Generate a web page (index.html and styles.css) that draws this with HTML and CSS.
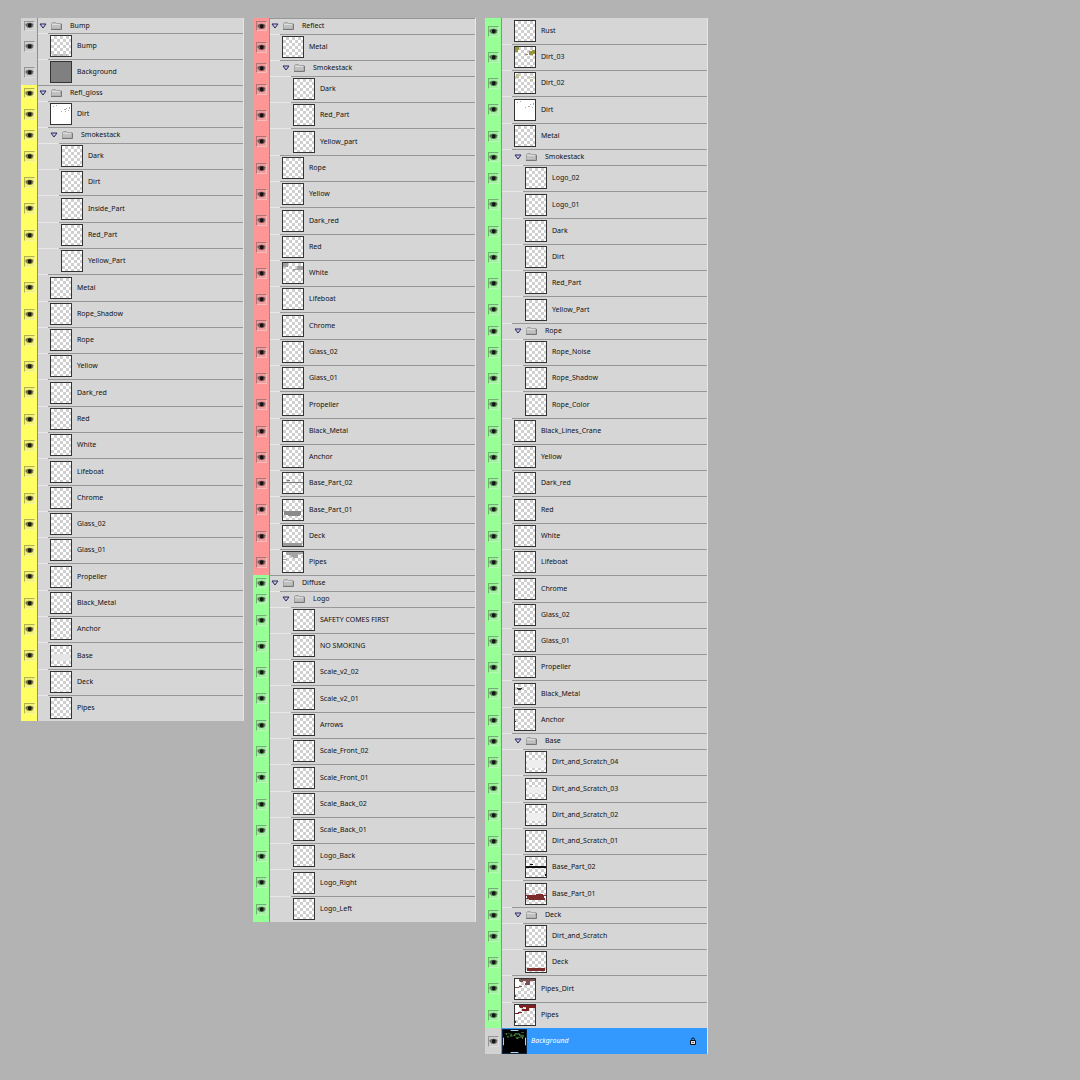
FILE: index.html
```
<!DOCTYPE html>
<html lang="en">
<head>
<meta charset="utf-8">
<meta name="viewport" content="width=device-width, initial-scale=1">
<title>Layers</title>
<link rel="stylesheet" href="styles.css">
</head>
<body>
<main class="panels">

<section class="panel" aria-label="Bump and gloss layers">
<ul class="group">
<li class="row folder cut"><input type="checkbox" id="f1" checked><button class="twist" aria-label="Collapse Bump"></button><label for="f1">Bump</label></li>
<li class="row layer"><label><input type="checkbox" checked><i class="thumb"><svg viewBox="0 0 20 20"><path fill="#999" d="M1 18h15v2H1z" opacity=".5"/></svg></i>Bump</label></li>
<li class="row layer"><label><input type="checkbox" checked><i class="thumb gray"></i>Background</label></li>
</ul>
<ul class="group yellow">
<li class="row folder"><input type="checkbox" id="f2" checked><button class="twist" aria-label="Collapse Refl_gloss"></button><label for="f2">Refl_gloss</label></li>
<li class="row layer"><label><input type="checkbox" checked><i class="thumb white"><svg viewBox="0 0 20 20"><path fill="#aaa" d="M2 2h1v1H2zM10 7h1v1h-1zM13 5h2v1h-2zM15 4h1v1h-1zM18 3h1v2h-1zM17 6h1v1h-1zM14 7h1v1h-1zM5 1h1v1H5z"/></svg></i>Dirt</label></li>
<li class="row folder d1"><input type="checkbox" id="f3" checked><button class="twist" aria-label="Collapse Smokestack"></button><label for="f3">Smokestack</label></li>
<li class="row layer d2"><label><input type="checkbox" checked><i class="thumb"></i>Dark</label></li>
<li class="row layer d2"><label><input type="checkbox" checked><i class="thumb"></i>Dirt</label></li>
<li class="row layer d2"><label><input type="checkbox" checked><i class="thumb"></i>Inside_Part</label></li>
<li class="row layer d2"><label><input type="checkbox" checked><i class="thumb"></i>Red_Part</label></li>
<li class="row layer d2"><label><input type="checkbox" checked><i class="thumb"></i>Yellow_Part</label></li>
<li class="row layer"><label><input type="checkbox" checked><i class="thumb"></i>Metal</label></li>
<li class="row layer"><label><input type="checkbox" checked><i class="thumb"></i>Rope_Shadow</label></li>
<li class="row layer"><label><input type="checkbox" checked><i class="thumb"></i>Rope</label></li>
<li class="row layer"><label><input type="checkbox" checked><i class="thumb"></i>Yellow</label></li>
<li class="row layer"><label><input type="checkbox" checked><i class="thumb"></i>Dark_red</label></li>
<li class="row layer"><label><input type="checkbox" checked><i class="thumb"></i>Red</label></li>
<li class="row layer"><label><input type="checkbox" checked><i class="thumb"></i>White</label></li>
<li class="row layer"><label><input type="checkbox" checked><i class="thumb"></i>Lifeboat</label></li>
<li class="row layer"><label><input type="checkbox" checked><i class="thumb"></i>Chrome</label></li>
<li class="row layer"><label><input type="checkbox" checked><i class="thumb"></i>Glass_02</label></li>
<li class="row layer"><label><input type="checkbox" checked><i class="thumb"></i>Glass_01</label></li>
<li class="row layer"><label><input type="checkbox" checked><i class="thumb"></i>Propeller</label></li>
<li class="row layer"><label><input type="checkbox" checked><i class="thumb"></i>Black_Metal</label></li>
<li class="row layer"><label><input type="checkbox" checked><i class="thumb"></i>Anchor</label></li>
<li class="row layer"><label><input type="checkbox" checked><i class="thumb"><svg viewBox="0 0 20 20"><path fill="#e6e6e6" d="M1 8h18v7H1z"/></svg></i>Base</label></li>
<li class="row layer"><label><input type="checkbox" checked><i class="thumb"><svg viewBox="0 0 20 20"><path fill="#eee" d="M1 17h18v2H1z"/></svg></i>Deck</label></li>
<li class="row layer"><label><input type="checkbox" checked><i class="thumb"></i>Pipes</label></li>
</ul>
</section>

<section class="panel" aria-label="Reflect and diffuse layers">
<ul class="group red">
<li class="row folder"><input type="checkbox" id="f4" checked><button class="twist" aria-label="Collapse Reflect"></button><label for="f4">Reflect</label></li>
<li class="row layer"><label><input type="checkbox" checked><i class="thumb"></i>Metal</label></li>
<li class="row folder d1"><input type="checkbox" id="f5" checked><button class="twist" aria-label="Collapse Smokestack"></button><label for="f5">Smokestack</label></li>
<li class="row layer d2"><label><input type="checkbox" checked><i class="thumb"></i>Dark</label></li>
<li class="row layer d2"><label><input type="checkbox" checked><i class="thumb"></i>Red_Part</label></li>
<li class="row layer d2"><label><input type="checkbox" checked><i class="thumb"></i>Yellow_part</label></li>
<li class="row layer"><label><input type="checkbox" checked><i class="thumb"></i>Rope</label></li>
<li class="row layer"><label><input type="checkbox" checked><i class="thumb"></i>Yellow</label></li>
<li class="row layer"><label><input type="checkbox" checked><i class="thumb"></i>Dark_red</label></li>
<li class="row layer"><label><input type="checkbox" checked><i class="thumb"></i>Red</label></li>
<li class="row layer"><label><input type="checkbox" checked><i class="thumb"><svg viewBox="0 0 20 20"><path fill="#a0a0a0" d="M0 0h5v4H0zM14 3h6v4h-6zM10 6h4v1h-2v1h-2z"/></svg></i>White</label></li>
<li class="row layer"><label><input type="checkbox" checked><i class="thumb"></i>Lifeboat</label></li>
<li class="row layer"><label><input type="checkbox" checked><i class="thumb"></i>Chrome</label></li>
<li class="row layer"><label><input type="checkbox" checked><i class="thumb"></i>Glass_02</label></li>
<li class="row layer"><label><input type="checkbox" checked><i class="thumb"></i>Glass_01</label></li>
<li class="row layer"><label><input type="checkbox" checked><i class="thumb"></i>Propeller</label></li>
<li class="row layer"><label><input type="checkbox" checked><i class="thumb"></i>Black_Metal</label></li>
<li class="row layer"><label><input type="checkbox" checked><i class="thumb"></i>Anchor</label></li>
<li class="row layer"><label><input type="checkbox" checked><i class="thumb"><svg viewBox="0 0 20 20"><path fill="#777" d="M0 9h20v1H0zM4 7h3v1H4z"/></svg></i>Base_Part_02</label></li>
<li class="row layer"><label><input type="checkbox" checked><i class="thumb"><svg viewBox="0 0 20 20"><path fill="#8a8a8a" d="M1 11h17v4h-1v1H5v-1H1z"/></svg></i>Base_Part_01</label></li>
<li class="row layer"><label><input type="checkbox" checked><i class="thumb"><svg viewBox="0 0 20 20"><path fill="#999" d="M0 17h19v3H0z"/></svg></i>Deck</label></li>
<li class="row layer"><label><input type="checkbox" checked><i class="thumb"><svg viewBox="0 0 20 20"><path fill="#a5a5a5" d="M3 0h17v2h-5v4h-5V5H8V3H3zM0 7h4v1H0z"/></svg></i>Pipes</label></li>
</ul>
<ul class="group green">
<li class="row folder"><input type="checkbox" id="f6" checked><button class="twist" aria-label="Collapse Diffuse"></button><label for="f6">Diffuse</label></li>
<li class="row folder d1"><input type="checkbox" id="f7" checked><button class="twist" aria-label="Collapse Logo"></button><label for="f7">Logo</label></li>
<li class="row layer d2"><label><input type="checkbox" checked><i class="thumb"></i>SAFETY COMES FIRST</label></li>
<li class="row layer d2"><label><input type="checkbox" checked><i class="thumb"></i>NO SMOKING</label></li>
<li class="row layer d2"><label><input type="checkbox" checked><i class="thumb"></i>Scale_v2_02</label></li>
<li class="row layer d2"><label><input type="checkbox" checked><i class="thumb"></i>Scale_v2_01</label></li>
<li class="row layer d2"><label><input type="checkbox" checked><i class="thumb"></i>Arrows</label></li>
<li class="row layer d2"><label><input type="checkbox" checked><i class="thumb"></i>Scale_Front_02</label></li>
<li class="row layer d2"><label><input type="checkbox" checked><i class="thumb"></i>Scale_Front_01</label></li>
<li class="row layer d2"><label><input type="checkbox" checked><i class="thumb"></i>Scale_Back_02</label></li>
<li class="row layer d2"><label><input type="checkbox" checked><i class="thumb"></i>Scale_Back_01</label></li>
<li class="row layer d2"><label><input type="checkbox" checked><i class="thumb"></i>Logo_Back</label></li>
<li class="row layer d2"><label><input type="checkbox" checked><i class="thumb"></i>Logo_Right</label></li>
<li class="row layer d2"><label><input type="checkbox" checked><i class="thumb"></i>Logo_Left</label></li>
</ul>
</section>

<section class="panel" aria-label="Diffuse layers, continued">
<ul class="group green">
<li class="row layer cut"><label><input type="checkbox" checked><i class="thumb"></i>Rust</label></li>
<li class="row layer"><label><input type="checkbox" checked><i class="thumb"><svg viewBox="0 0 20 20"><path fill="#9a9440" d="M0 0h4v3H3v2H0zM14 4h6v3h-2v1h-4zM10 7h3v1h-3zM17 3h3v1h-3z"/></svg></i>Dirt_03</label></li>
<li class="row layer"><label><input type="checkbox" checked><i class="thumb"><svg viewBox="0 0 20 20"><path fill="#c3c09c" d="M1 1h3v4H1zM14 4h4v1h-4zM15 6h3v2h-3z"/></svg></i>Dirt_02</label></li>
<li class="row layer"><label><input type="checkbox" checked><i class="thumb white"><svg viewBox="0 0 20 20"><path fill="#aaa" d="M2 2h1v1H2zM10 7h1v1h-1zM13 6h2v1h-2zM15 4h1v1h-1zM18 3h1v2h-1zM17 7h1v1h-1zM5 1h1v1H5z"/></svg></i>Dirt</label></li>
<li class="row layer"><label><input type="checkbox" checked><i class="thumb"></i>Metal</label></li>
<li class="row folder d1"><input type="checkbox" id="f8" checked><button class="twist" aria-label="Collapse Smokestack"></button><label for="f8">Smokestack</label></li>
<li class="row layer d2"><label><input type="checkbox" checked><i class="thumb"></i>Logo_02</label></li>
<li class="row layer d2"><label><input type="checkbox" checked><i class="thumb"></i>Logo_01</label></li>
<li class="row layer d2"><label><input type="checkbox" checked><i class="thumb"></i>Dark</label></li>
<li class="row layer d2"><label><input type="checkbox" checked><i class="thumb"></i>Dirt</label></li>
<li class="row layer d2"><label><input type="checkbox" checked><i class="thumb"></i>Red_Part</label></li>
<li class="row layer d2"><label><input type="checkbox" checked><i class="thumb"></i>Yellow_Part</label></li>
<li class="row folder d1"><input type="checkbox" id="f9" checked><button class="twist" aria-label="Collapse Rope"></button><label for="f9">Rope</label></li>
<li class="row layer d2"><label><input type="checkbox" checked><i class="thumb"></i>Rope_Noise</label></li>
<li class="row layer d2"><label><input type="checkbox" checked><i class="thumb"></i>Rope_Shadow</label></li>
<li class="row layer d2"><label><input type="checkbox" checked><i class="thumb"></i>Rope_Color</label></li>
<li class="row layer"><label><input type="checkbox" checked><i class="thumb"></i>Black_Lines_Crane</label></li>
<li class="row layer"><label><input type="checkbox" checked><i class="thumb"></i>Yellow</label></li>
<li class="row layer"><label><input type="checkbox" checked><i class="thumb"></i>Dark_red</label></li>
<li class="row layer"><label><input type="checkbox" checked><i class="thumb"></i>Red</label></li>
<li class="row layer"><label><input type="checkbox" checked><i class="thumb"></i>White</label></li>
<li class="row layer"><label><input type="checkbox" checked><i class="thumb"></i>Lifeboat</label></li>
<li class="row layer"><label><input type="checkbox" checked><i class="thumb"></i>Chrome</label></li>
<li class="row layer"><label><input type="checkbox" checked><i class="thumb"></i>Glass_02</label></li>
<li class="row layer"><label><input type="checkbox" checked><i class="thumb"></i>Glass_01</label></li>
<li class="row layer"><label><input type="checkbox" checked><i class="thumb"></i>Propeller</label></li>
<li class="row layer"><label><input type="checkbox" checked><i class="thumb"><svg viewBox="0 0 20 20"><path fill="#333" d="M2 4h5v1H6v1H3V5H2z"/></svg></i>Black_Metal</label></li>
<li class="row layer"><label><input type="checkbox" checked><i class="thumb"><svg viewBox="0 0 20 20"><path fill="#444" d="M0 11h1v1H0z"/></svg></i>Anchor</label></li>
<li class="row folder d1"><input type="checkbox" id="f10" checked><button class="twist" aria-label="Collapse Base"></button><label for="f10">Base</label></li>
<li class="row layer d2"><label><input type="checkbox" checked><i class="thumb"><svg viewBox="0 0 20 20"><path fill="#eee" d="M1 8h18v8H1z"/></svg></i>Dirt_and_Scratch_04</label></li>
<li class="row layer d2"><label><input type="checkbox" checked><i class="thumb"><svg viewBox="0 0 20 20"><path fill="#eee" d="M1 8h18v6H1z"/></svg></i>Dirt_and_Scratch_03</label></li>
<li class="row layer d2"><label><input type="checkbox" checked><i class="thumb"><svg viewBox="0 0 20 20"><path fill="#eee" d="M1 8h18v8H1z"/></svg></i>Dirt_and_Scratch_02</label></li>
<li class="row layer d2"><label><input type="checkbox" checked><i class="thumb"></i>Dirt_and_Scratch_01</label></li>
<li class="row layer d2"><label><input type="checkbox" checked><i class="thumb"><svg viewBox="0 0 20 20"><path fill="#111" d="M0 9h20v2H0zM4 7h3v1H4zM19 17h1v2h-1z"/></svg></i>Base_Part_02</label></li>
<li class="row layer d2"><label><input type="checkbox" checked><i class="thumb"><svg viewBox="0 0 20 20"><path fill="#7d2c2c" d="M0 11h10v-1h7v1h3v1h-2v2h1v2H3v-1H0v-1h1v-2H0z"/></svg></i>Base_Part_01</label></li>
<li class="row folder d1"><input type="checkbox" id="f11" checked><button class="twist" aria-label="Collapse Deck"></button><label for="f11">Deck</label></li>
<li class="row layer d2"><label><input type="checkbox" checked><i class="thumb"></i>Dirt_and_Scratch</label></li>
<li class="row layer d2"><label><input type="checkbox" checked><i class="thumb"><svg viewBox="0 0 20 20"><path fill="#7d2c2c" d="M1 16h18v3H1z"/></svg></i>Deck</label></li>
<li class="row layer"><label><input type="checkbox" checked><i class="thumb"><svg viewBox="0 0 20 20"><path fill="#fff" d="M0 0h4v12H0z"/><path fill="#7a5050" d="M4 0h16v2h-5v4h-5V4h1V2H8v1H5V2H4zM0 8h4V7h3v1H4v1H0zM0 16h1v2H0z"/></svg></i>Pipes_Dirt</label></li>
<li class="row layer"><label><input type="checkbox" checked><i class="thumb"><svg viewBox="0 0 20 20"><path fill="#fff" d="M0 0h4v12H0z"/><path fill="#7d2020" d="M4 0h16v3h-6v3H7V4h4V2H8v1H5V2H4zM0 8h3V7h4v1H4v1H0zM0 16h1v2H0z"/></svg></i>Pipes</label></li>
</ul>
<ul class="group">
<li class="row layer selected"><label><input type="checkbox" checked><i class="thumb"><svg viewBox="0 0 24 24"><path fill="#000" d="M0 0h24v24H0z"/><path fill="#2f6238" d="M2 3h5v1H2zM7 5h3v2H7zM12 3h5v2h-5zM18 5h4v2h-4zM4 6h2v2H4zM13 7h7v1h-7zM19 2h3v1h-3z"/><path fill="#8cb84c" d="M11 5h2v1h-2zM17 4h1v2h-1zM14 8h2v1h-2zM20 7h1v2h-1zM3 4h1v1H3zM8 4h1v1H8z"/><path fill="none" stroke="#bfe0ff" d="M8 .5h8M8 23.5h8M.5 8v8M23.5 8v8"/></svg></i><em>Background</em></label><svg class="lock" viewBox="0 0 8 8"><path fill="none" stroke="#111" d="M2.500 4V2.500a1.500 1.500 0 0 1 3 0V4"/><path fill="#ddd" stroke="#111" d="M1.500 3.500h5v4h-5z"/><path fill="#111" d="M3.500 5h1v1h-1z"/></svg></li>
</ul>
</section>

</main>
</body>
</html>
```
FILE: styles.css
```
* {
  box-sizing: border-box;
}

body {
  margin: 0;
  background: #b3b3b3;
  color: #111;
  font: 7px/10px "Noto Sans", "DejaVu Sans Condensed", sans-serif;
}

.panels {
  display: grid;
  grid-template-columns: repeat(3, 223fr) 363fr;
  gap: 9px;
  align-items: start;
  padding: 18px 0 26px 21px;
}

.group {
  --flag: #d2d2d2;
  margin: 0;
  padding: 0;
  list-style: none;
}

.yellow { --flag: #ffff63; }
.red { --flag: #ff9696; }
.green { --flag: #96ff96; }

/* Each row paints the eye column, its divider and an indented top rule. */
.row {
  --indent: 0px;
  --rule: 1px;
  display: flex;
  align-items: center;
  border-right: 1px solid #e6e6e6;
  background:
    linear-gradient(#979797 0 0) calc(16px + var(--indent)) 0 / 100% var(--rule) no-repeat,
    linear-gradient(#e9e9e9 0 0) 17px 0 / 100% var(--rule) no-repeat,
    linear-gradient(90deg, var(--flag) 16px, #8e8e8e 16px 17px, #d6d6d6 17px);
}

.layer {
  --indent: 11px;
  height: 26px;
}

.layer:nth-child(7n of .layer),
.layer:nth-child(7n + 4 of .layer) {
  height: 27px;
}

.cut { --rule: 0px; }
.folder { height: 16px; }
.folder.cut { height: 15px; }

.d1 { --indent: 11px; }
.d2 { --indent: 22px; }

.layer label {
  display: flex;
  flex: 1;
  align-items: center;
}

input {
  appearance: none;
  flex: none;
  width: 11px;
  height: 11px;
  margin: 0 calc(4px + var(--indent)) 0 3px;
  border: 1px solid;
  border-color: #0004 #fff5 #fff5 #0004;
}

input:checked {
  background: #bbb3 url("data:image/svg+xml,%3Csvg xmlns='http://www.w3.org/2000/svg' viewBox='0 0 9 9'%3E%3Cpath d='M.5 3Q4.500 .5 8.500 3L8 5.500Q6.500 7 4.500 7 2 7 .5 4.500z' fill='%23222' fill-opacity='.6'/%3E%3Ccircle cx='4.700' cy='4.200' r='2' fill='%23000' fill-opacity='.8'/%3E%3Cpath d='M2 4h1v1H2zM6.500 4h1v1h-1z' fill='%23fff' fill-opacity='.25'/%3E%3C/svg%3E") center / 9px 9px no-repeat;
}

.folder input { height: 10px; }

.thumb {
  flex: none;
  width: 22px;
  height: 22px;
  margin-right: 5px;
  border: 1px solid #333;
  background: repeating-conic-gradient(#cfcfcf 0 25%, #fff 0 50%) 0 0 / 6px 6px;
}

.thumb.gray { background: #808080; }
.thumb.white { background: #fff; }

.thumb svg {
  display: block;
  width: 100%;
}

.twist {
  width: 8px;
  height: 6px;
  padding: 0;
  border: 0;
  background: url("data:image/svg+xml,%3Csvg xmlns='http://www.w3.org/2000/svg' viewBox='0 0 8 6'%3E%3Cpath d='M1 1h6L4 5z' fill='%23c8c8e0' stroke='%2326265e'/%3E%3C/svg%3E");
}

.folder label {
  display: flex;
  align-items: center;
  gap: 8px;
  margin-left: 4px;
}

.folder label::before {
  content: "";
  width: 11px;
  height: 8px;
  background: url("data:image/svg+xml,%3Csvg xmlns='http://www.w3.org/2000/svg' viewBox='0 0 11 8'%3E%3Cpath d='M.5 7V1.500l1-1h3l1 1h4.500V7z' fill='%23c0c0c0' stroke='%23a4a4a4'/%3E%3Cpath d='M0 7.500h10.500V2' fill='none' stroke='%23777'/%3E%3Cpath d='M1 2.500h8' stroke='%23ddd'/%3E%3C/svg%3E");
}

.row.selected {
  --indent: 0px;
  padding-right: 10px;
  background: linear-gradient(90deg, var(--flag) 16px, #8e8e8e 16px 17px, #3399ff 17px);
  color: #fff;
}

.selected input { margin-right: 3px; }

.selected .thumb {
  width: 25px;
  height: 25px;
  margin-right: 4px;
  border-color: #0c2440;
}

.lock {
  width: 8px;
  height: 8px;
}
```
